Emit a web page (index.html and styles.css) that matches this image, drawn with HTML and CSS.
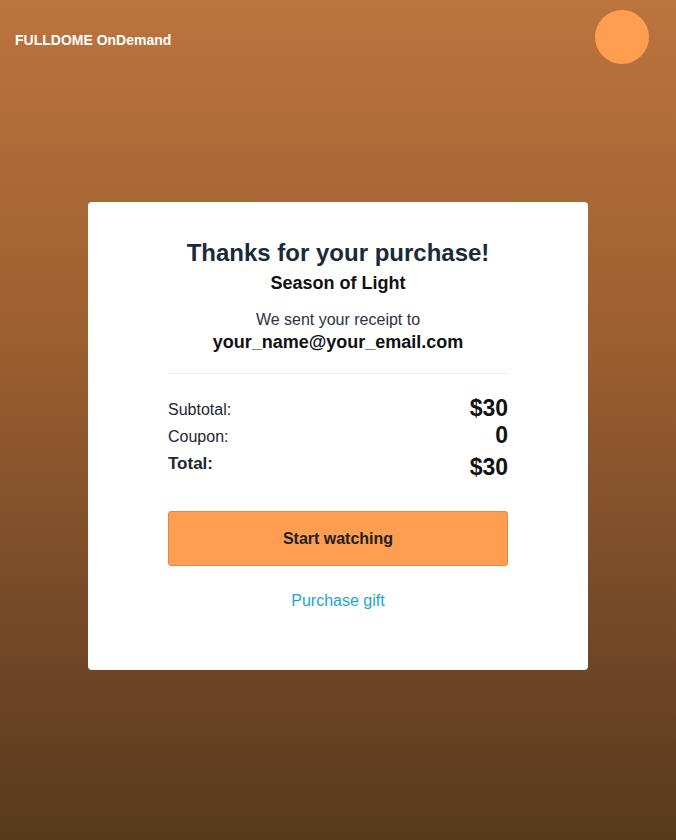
FILE: index.html
```html
<!DOCTYPE html>
<html>
<head>
<meta charset="utf-8">
<link rel="stylesheet" href="styles.css">
</head>
<body>
<div class="page">
  <header class="topbar">
    <div class="brand">FULLDOME OnDemand</div>
    <div class="avatar"></div>
  </header>
  <main class="main">
    <section class="card">
      <h1 class="title">Thanks for your purchase!</h1>
      <div class="product">Season of Light</div>
      <div class="receipt">We sent your receipt to</div>
      <div class="email">your_name@your_email.com</div>
      <hr class="divider">
      <div class="rows">
        <div class="row"><span class="label">Subtotal:</span><span class="value">$30</span></div>
        <div class="row"><span class="label">Coupon:</span><span class="value">0</span></div>
        <div class="row total"><span class="label">Total:</span><span class="value">$30</span></div>
      </div>
      <button class="btn">Start watching</button>
      <a class="gift" href="#">Purchase gift</a>
    </section>
  </main>
</div>
</body>
</html>
```

FILE: styles.css
```css
* { box-sizing: border-box; }
html, body { margin: 0; padding: 0; }
body {
  font-family: "Liberation Sans", Arial, sans-serif;
  background: linear-gradient(to bottom, #bc743e 0%, #9c5f31 40%, #6e4525 80%, #573a1c 100%);
  min-height: 840px;
}
.page { min-height: 840px; display: flex; flex-direction: column; }
.topbar {
  height: 74px;
  display: flex;
  align-items: center;
  justify-content: space-between;
  padding: 0 27px 0 15px;
}
.brand { color: #fff; font-weight: bold; font-size: 14px; margin-top: 6px; }
.avatar {
  width: 54px; height: 54px; border-radius: 50%;
  background: #ff9d51;
  margin-top: 0;
}
.main { display: flex; justify-content: center; padding-top: 128px; }
.card {
  width: 500px;
  height: 468px;
  background: #fff;
  border-radius: 4px;
  padding: 36px 80px 0;
  display: flex;
  flex-direction: column;
  align-items: center;
  text-align: center;
}
.title {
  margin: 0;
  font-size: 24px;
  line-height: 30px;
  color: #1c2937;
  font-weight: bold;
}
.product { margin-top: 4px; font-size: 18px; font-weight: bold; color: #111; line-height: 22px; }
.receipt { margin-top: 16px; font-size: 16px; color: #2c3440; line-height: 20px; }
.email { margin-top: 1px; font-size: 18px; font-weight: bold; color: #111; line-height: 22px; }
.divider { width: 100%; border: 0; border-top: 1px solid #ececec; margin: 20px 0 0; }
.rows { width: 100%; margin-top: 23px; display: flex; flex-direction: column; gap: 5px; }
.row { display: flex; justify-content: space-between; align-items: flex-end; height: 22px; }
.row.total { margin-top: 5px; }
.label { font-size: 16px; color: #1e2630; line-height: 18px; }
.value { font-size: 23px; font-weight: bold; color: #111; line-height: 22px; }
.total .label { font-size: 17px; font-weight: bold; line-height: 22px; position: relative; top: -3px; }
.btn {
  margin-top: 33px;
  width: 100%;
  height: 55px;
  background: #ff9d51;
  border: 1px solid #e5894a;
  border-radius: 3px;
  font-family: "Liberation Sans", Arial, sans-serif;
  font-size: 16px;
  font-weight: bold;
  color: #222;
}
.gift {
  margin-top: 26px;
  font-size: 16px;
  color: #1aa5d4;
  text-decoration: none;
}
```
